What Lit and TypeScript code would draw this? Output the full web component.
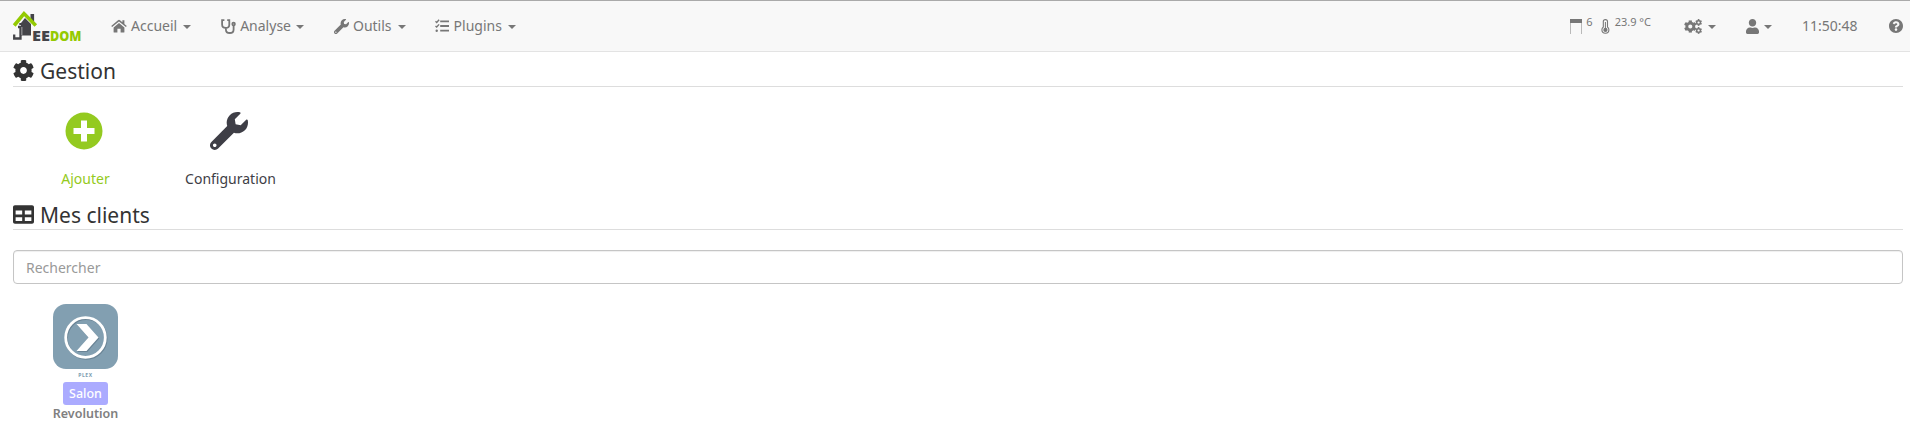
import { LitElement, html, css, svg } from "lit";
import { customElement } from "lit/decorators.js";

const WRENCH = svg`<path d="M507.73 109.1c-2.24-9.03-13.54-12.09-20.12-5.51l-74.36 74.36-67.88-11.31-11.31-67.88 74.36-74.36c6.62-6.62 3.43-17.9-5.66-20.16-47.38-11.74-99.55.91-136.58 37.93-39.64 39.64-50.55 97.1-34.05 147.2L18.74 402.76c-24.99 24.99-24.99 65.51 0 90.5 24.99 24.99 65.51 24.99 90.5 0l213.21-213.21c50.12 16.71 107.47 5.68 147.37-34.22 37.07-37.07 49.7-89.32 37.91-136.73zM64 472c-13.25 0-24-10.75-24-24 0-13.26 10.75-24 24-24s24 10.74 24 24c0 13.25-10.75 24-24 24z"/>`;
const COG = svg`<path d="M487.4 315.7l-42.6-24.6c4.3-23.2 4.3-47 0-70.2l42.6-24.6c4.9-2.8 7.1-8.6 5.5-14-11.1-35.6-30-67.8-54.7-94.6-3.8-4.1-10-5.1-14.8-2.3L380.8 110c-17.9-15.4-38.5-27.3-60.8-35.1V25.8c0-5.6-3.9-10.5-9.4-11.7-36.7-8.2-74.3-7.8-109.2 0-5.5 1.2-9.4 6.1-9.4 11.7V75c-22.2 7.9-42.8 19.8-60.8 35.1L88.7 85.5c-4.9-2.8-11-1.9-14.8 2.3-24.7 26.7-43.6 58.9-54.7 94.6-1.7 5.4.6 11.2 5.5 14L67.3 221c-4.3 23.2-4.3 47 0 70.2l-42.6 24.6c-4.9 2.8-7.1 8.6-5.5 14 11.1 35.6 30 67.8 54.7 94.6 3.8 4.1 10 5.1 14.8 2.3l42.6-24.6c17.9 15.4 38.5 27.3 60.8 35.1v49.2c0 5.6 3.9 10.5 9.4 11.7 36.7 8.2 74.3 7.8 109.2 0 5.5-1.2 9.4-6.1 9.4-11.7v-49.2c22.2-7.9 42.8-19.8 60.8-35.1l42.6 24.6c4.9 2.8 11 1.9 14.8-2.3 24.7-26.7 43.6-58.9 54.7-94.6 1.5-5.5-.7-11.3-5.6-14.1zM256 336c-44.1 0-80-35.9-80-80s35.9-80 80-80 80 35.9 80 80-35.9 80-80 80z"/>`;

const icons = {
  home: html`<svg width="16" height="14" viewBox="0 0 16 14"><path d="M8 3.9 2.6 8.4V13q0 .6.6.6h3.2V9.7h3.2v3.9h3.2q.6 0 .6-.6V8.4z"/><path d="M15.8 6.9 13.4 4.9V1.2h-2v2L9 1.2q-1-.8-2 0L.2 6.9l.9 1.1L8 2.4 14.9 8z"/></svg>`,
  stethoscope: html`<svg width="15" height="15" viewBox="0 0 15 15" class="line"><path d="M3.4 1.2H1.1v4.3q0 3.4 3.6 3.4t3.6-3.4V1.2H6.2M4.9 9v1.4q0 3.6 3.9 3.6 3.8 0 3.8-3.6V6.2"/><circle cx="12.6" cy="5" r="1.3"/></svg>`,
  wrench: html`<svg width="15" height="15" viewBox="0 0 512 512">${WRENCH}</svg>`,
  tasks: html`<svg width="15" height="14" viewBox="0 0 15 14"><path d="M5.2 1.5H14v1.8H5.2zM5.2 6.1H14v1.8H5.2zM5.2 10.8H14v1.8H5.2z"/><circle cx="1.7" cy="11.7" r="1.2"/><path class="stroke" d="M.5 2.3l1.2 1.1L4.1.8M.5 6.9 1.7 8l2.4-2.6"/></svg>`,
  cogs: html`<svg width="18" height="15" viewBox="0 0 18 15"><svg x="0" y="1.2" width="12.6" height="12.6" viewBox="8 8 496 496">${COG}</svg><svg x="11.2" y="0.1" width="6.8" height="6.8" viewBox="8 8 496 496">${COG}</svg><svg x="11.2" y="8.1" width="6.8" height="6.8" viewBox="8 8 496 496">${COG}</svg></svg>`,
  user: html`<svg width="13" height="15" viewBox="0 0 448 512"><path d="M224 256c70.7 0 128-57.3 128-128S294.7 0 224 0 96 57.3 96 128s57.3 128 128 128zm89.6 32h-16.7c-22.2 10.2-46.9 16-72.9 16s-50.6-5.8-72.9-16h-16.7C60.2 288 0 348.2 0 422.4V464c0 26.5 21.5 48 48 48h352c26.5 0 48-21.5 48-48v-41.6c0-74.2-60.2-134.4-134.4-134.4z"/></svg>`,
  help: html`<svg width="14" height="14" viewBox="8 8 496 496"><path d="M504 256c0 136.997-111.043 248-248 248S8 392.997 8 256C8 119.083 119.043 8 256 8s248 111.083 248 248zM262.655 90c-54.497 0-89.255 22.957-116.549 63.758-3.536 5.286-2.353 12.415 2.715 16.258l34.699 26.31c5.205 3.947 12.621 3.008 16.665-2.122 17.864-22.658 30.113-35.797 57.303-35.797 20.429 0 45.698 13.148 45.698 32.958 0 14.976-12.363 22.667-32.534 33.976C247.128 238.528 216 254.941 216 296v4c0 6.627 5.373 12 12 12h56c6.627 0 12-5.373 12-12v-1.333c0-28.462 83.186-29.647 83.186-106.667 0-58.002-60.165-102-116.531-102zM256 338c-25.365 0-46 20.635-46 46 0 25.364 20.635 46 46 46s46-20.636 46-46c0-25.365-20.635-46-46-46z"/></svg>`,
  shutter: html`<svg width="12" height="15" viewBox="0 0 12 15"><path d="M0 0h12v4H0z"/><path d="M.1 4h.8v11H.1zM11.1 4h.8v11h-.8z" opacity=".6"/></svg>`,
  thermo: html`<svg width="9" height="15" viewBox="0 0 9 15"><path class="stroke thin" d="M2.3 8V2.6q0-2 2.1-2t2.1 2V8q1.4 1 1.4 2.8 0 3.5-3.5 3.5T.9 10.8q0-1.8 1.4-2.8z"/><circle cx="4.4" cy="10.9" r="2.1"/><path d="M3.9 3h1v7h-1z"/></svg>`,
};

const menu = [
  { id: "home", icon: icons.home, label: "Accueil" },
  { id: "analyse", icon: icons.stethoscope, label: "Analyse" },
  { id: "tools", icon: icons.wrench, label: "Outils" },
  { id: "plugins", icon: icons.tasks, label: "Plugins" },
];

@customElement("app-root")
export class AppRoot extends LitElement {
  static styles = css`
    :host { display: block; height: 434px; overflow: hidden; background: #fff; font: 14px/20px "Noto Sans", sans-serif; color: #333; }
    * { box-sizing: border-box; }
    svg { display: block; flex: none; fill: currentColor; }
    .line { fill: none; stroke: currentColor; stroke-width: 1.8; }
    .stroke { fill: none; stroke: currentColor; stroke-width: 1.4; }
    .thin { stroke-width: 1.1; }
    .bar { display: flex; align-items: center; height: 52px; padding: 0 7px 0 13px; background: #f8f8f8; border-top: 1px solid #aaa; border-bottom: 1px solid #e3e3e3; color: #777; }
    .logo { margin-right: 29px; overflow: visible; }
    .logo text { font: 800 13.5px "Open Sans", sans-serif; }
    .menu { display: flex; gap: 29px; flex: 1; }
    .item { display: flex; align-items: center; }
    .item .label { margin: 0 6px 0 4px; }
    .home .label { margin-right: 6px; }
    .analyse { margin-left: 1px; }
    .analyse .label { margin-right: 5px; }
    .tools { margin-left: 1px; }
    .caret { border: 4px solid transparent; border-top-color: currentColor; border-bottom: 0; margin-top: 1px; }
    .status { display: flex; align-items: center; }
    .small { font-size: 11px; line-height: 14px; margin: 0 0 8px 4px; }
    .thermo { margin-left: 8px; }
    .temp { margin-left: 5px; }
    .cogs { margin-left: 33px; gap: 6px; }
    .user { margin-left: 30px; gap: 5px; }
    .clock { margin: 0 30px; width: 57px; white-space: nowrap; }
    .content { padding: 0 7px 0 13px; }
    .title { display: flex; align-items: center; gap: 6px; margin: 0; height: 35px; border-bottom: 1px solid #ddd; font-size: 21px; line-height: 28px; font-weight: 400; }
    .title span { margin-top: 4px; }
    .title svg { width: 21px; height: 21px; margin-top: 3px; }
    .actions { display: flex; height: 109px; padding-top: 25px; }
    .action { display: flex; flex-direction: column; align-items: center; width: 145px; color: #3e3e46; }
    .action svg { width: 38px; height: 38px; margin-right: 4px; }
    .action span { margin-top: 19px; line-height: 20px; }
    .add { color: #94ca20; }
    .search { display: block; width: 100%; height: 34px; margin-top: 20px; padding: 6px 12px; border: 1px solid #c5c5c5; border-radius: 4px; font: inherit; outline: 0; box-shadow: inset 0 1px 1px #0001; }
    .search::placeholder { color: #999; opacity: 1; }
    .client { display: flex; flex-direction: column; align-items: center; width: 145px; padding-top: 20px; }
    .clients { height: 34px; }
    .brand { font-size: 5px; line-height: 7px; font-weight: 700; letter-spacing: .6px; color: #7c9cb0; margin: 3px 0 3px; }
    .room { height: 23px; width: 45px; text-align: center; line-height: 23px; border-radius: 3px; background: #ababff; color: #fff; font-size: 12.5px; font-weight: 500; }
    .name { font-size: 12.5px; line-height: 18px; font-weight: 600; color: #808080; }
  `;

  render() {
    return html`
      <nav class="bar">
        <svg class="logo" width="69" height="40" viewBox="0 -5 69 40">
          <path fill="#444449" d="M17.5 3h3.6v9l-3.6-3zM8 12l4-5 6 6v11.5H8z"/>
          <path fill="none" stroke="#94ca02" stroke-width="3.6" d="M1.2 14.5 11 2.6l11.800 11.900"/>
          <path fill="none" stroke="#f8f8f8" stroke-width="3.800" d="M7.300 16v8"/>
          <path fill="none" stroke="#444449" stroke-width="2.300" d="M7.500 15v12.500H1.200v-4M5 16h3"/>
          <path fill="#444449" d="M6.300 12h2.400v2H6.300z"/>
          <text x="19" y="29.500" fill="#444449" textLength="18" lengthAdjust="spacingAndGlyphs">EE</text>
          <text x="37" y="29.500" fill="#94ca02" textLength="31.500" lengthAdjust="spacingAndGlyphs">DOM</text>
        </svg>
        <div class="menu">
          ${menu.map((m) => html`<div class="item ${m.id}">${m.icon}<span class="label">${m.label}</span><i class="caret"></i></div>`)}
        </div>
        <div class="status">
          ${icons.shutter}<span class="small">6</span>
          <div class="thermo">${icons.thermo}</div><span class="small temp">23.9 °C</span>
          <div class="item cogs">${icons.cogs}<i class="caret"></i></div>
          <div class="item user">${icons.user}<i class="caret"></i></div>
          <span class="clock">11:50:48</span>
          ${icons.help}
        </div>
      </nav>
      <main class="content">
        <h2 class="title"><svg viewBox="8 8 496 496">${COG}</svg><span>Gestion</span></h2>
        <div class="actions">
          <div class="action add"><svg viewBox="0 0 38 38"><path fill-rule="evenodd" d="M19 .5a18.500 18.500 0 1 0 0 37 18.500 18.500 0 0 0 0-37zM16 8.500h6v7.500h7.500v6H22v7.500h-6V22H8.500v-6H16z"/></svg><span>Ajouter</span></div>
          <div class="action"><svg viewBox="0 0 512 512">${WRENCH}</svg><span>Configuration</span></div>
        </div>
        <h2 class="title clients"><svg viewBox="0 0 512 512"><path d="M464 32H48C21.490 32 0 53.490 0 80v352c0 26.510 21.490 48 48 48h416c26.510 0 48-21.490 48-48V80c0-26.510-21.490-48-48-48zM224 416H64v-96h160v96zm0-160H64v-96h160v96zm224 160H288v-96h160v96zm0-160H288v-96h160v96z"/></svg><span>Mes clients</span></h2>
        <input class="search" placeholder="Rechercher" />
        <div class="client">
          <svg width="65" height="65" viewBox="0 0 65 65">
            <rect width="65" height="65" rx="13" fill="#829fb1"/>
            <g transform="translate(.8 1)" opacity=".25"><circle cx="32.500" cy="33.500" r="19.800" fill="none" stroke="#234" stroke-width="2.800"/><path fill="#234" d="M23.500 20h10l12 13.500-12 13.500h-10l12-13.500z"/></g>
            <circle cx="32.500" cy="33.500" r="19.800" fill="none" stroke="#fff" stroke-width="2.800"/>
            <path fill="#fff" d="M23.500 20h10l12 13.500-12 13.500h-10l12-13.500z"/>
          </svg>
          <span class="brand">PLEX</span>
          <span class="room">Salon</span>
          <span class="name">Revolution</span>
        </div>
      </main>
    `;
  }
}
